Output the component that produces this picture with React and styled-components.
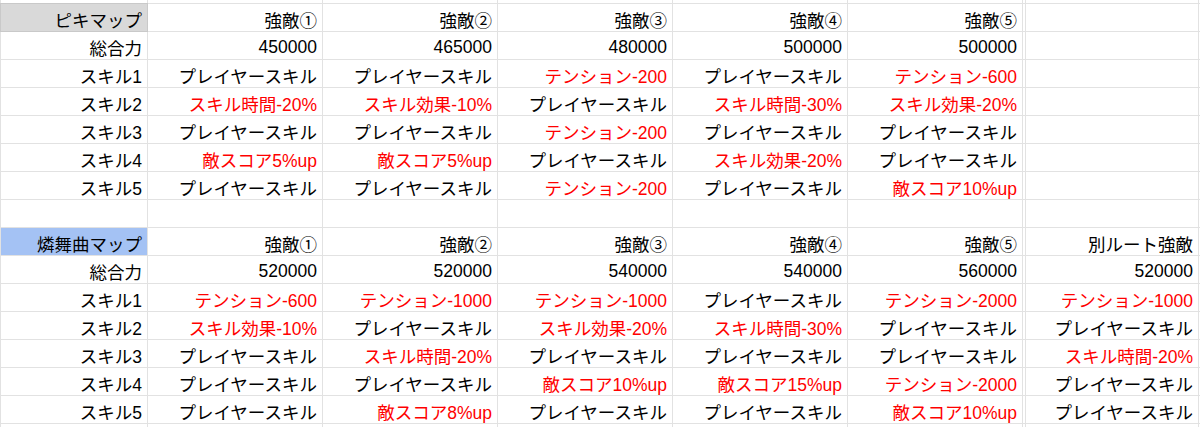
import React from "react";
import styled, { createGlobalStyle } from "styled-components";

const GlobalStyle = createGlobalStyle`
  html, body {
    margin: 0;
    padding: 0;
    background: #ffffff;
    overflow: hidden;
  }
  body {
    font-family: "Liberation Sans", "Noto Sans CJK JP", sans-serif;
  }
`;

const Sheet = styled.div`
  display: grid;
  grid-template-columns: 146px repeat(5, 174px) 2px 172px 40px;
  grid-template-rows: 3px repeat(15, 27px) 10px;
  gap: 1px;
  padding-left: 1px;
  background: #e2e2e2;
  width: max-content;
  height: 427px;
  overflow: hidden;
`;

const fills = {
  gray: "#d9d9d9",
  blue: "#a4c2f4",
};

const Cell = styled.div`
  display: flex;
  align-items: center;
  justify-content: flex-end;
  padding: 3px 5px 0 0;
  box-sizing: border-box;
  background: ${(p) => (p.$fill ? fills[p.$fill] : "#ffffff")};
  box-shadow: ${(p) => (p.$fill === "gray" ? "0 0 0 1px #c9c9c9" : "none")};
  color: ${(p) => (p.$red ? "#ff0000" : "#000000")};
  font-size: 17.5px;
  white-space: nowrap;
  overflow: hidden;
`;

const Divider = styled.div`
  background: #ffffff;
`;

const P = "プレイヤースキル";

const pikiRows = [
  ["総合力", "450000", "465000", "480000", "500000", "500000", ""],
  ["スキル1", P, P, "テンション-200", P, "テンション-600", ""],
  ["スキル2", "スキル時間-20%", "スキル効果-10%", P, "スキル時間-30%", "スキル効果-20%", ""],
  ["スキル3", P, P, "テンション-200", P, P, ""],
  ["スキル4", "敵スコア5%up", "敵スコア5%up", P, "スキル効果-20%", P, ""],
  ["スキル5", P, P, "テンション-200", P, "敵スコア10%up", ""],
];

const rondoRows = [
  ["総合力", "520000", "520000", "540000", "540000", "560000", "520000"],
  ["スキル1", "テンション-600", "テンション-1000", "テンション-1000", P, "テンション-2000", "テンション-1000"],
  ["スキル2", "スキル効果-10%", P, "スキル効果-20%", "スキル時間-30%", P, P],
  ["スキル3", P, "スキル時間-20%", P, P, P, "スキル時間-20%"],
  ["スキル4", P, P, "敵スコア10%up", "敵スコア15%up", "テンション-2000", P],
  ["スキル5", P, "敵スコア8%up", P, P, "敵スコア10%up", P],
];

const enemies = ["強敵①", "強敵②", "強敵③", "強敵④", "強敵⑤"];

const isBuff = (label, value) =>
  label.startsWith("スキル") && value !== "" && value !== P;

const Row = ({ cells, fill, label }) => (
  <>
    {cells.slice(0, 6).map((v, i) => (
      <Cell
        key={i}
        $fill={i === 0 ? fill : undefined}
        $red={i > 0 && isBuff(label, v)}
      >
        {v}
      </Cell>
    ))}
    <Divider />
    <Cell $red={isBuff(label, cells[6])}>{cells[6]}</Cell>
    <Cell />
  </>
);

const blank = ["", "", "", "", "", "", ""];

const App = () => (
  <>
    <GlobalStyle />
    <Sheet>
      <Row cells={blank} label="" />
      <Row cells={["ピキマップ", ...enemies, ""]} fill="gray" label="" />
      {pikiRows.map((r) => (
        <Row key={"p" + r[0]} cells={r} label={r[0]} />
      ))}
      <Row cells={blank} label="" />
      <Row cells={["燐舞曲マップ", ...enemies, "別ルート強敵"]} fill="blue" label="" />
      {rondoRows.map((r) => (
        <Row key={"r" + r[0]} cells={r} label={r[0]} />
      ))}
      <Row cells={blank} label="" />
    </Sheet>
  </>
);

export default App;
